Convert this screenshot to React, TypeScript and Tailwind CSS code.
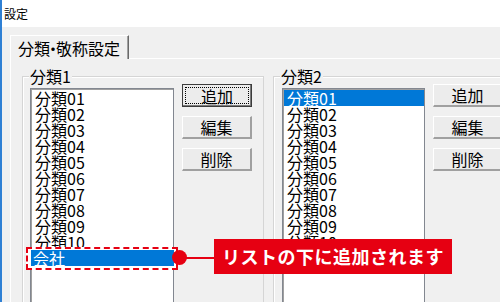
import React from 'react';

const items = ['分類01', '分類02', '分類03', '分類04', '分類05', '分類06', '分類07', '分類08', '分類09', '分類10'];

function ListBox({ selected, width }: { selected?: number; width: string }) {
  return (
    <div className={`${width} h-[260px] shrink-0 overflow-hidden bg-white border border-[#828790] shadow-[inset_1px_1px_0_#a0a0a0] pt-[1px] pl-[1px]`}>
      {items.map((item, i) => (
        <div
          key={item}
          className={`h-[16px] leading-[16px] pl-[3px] text-[16px] whitespace-nowrap ${
            i === selected ? 'bg-[#0078d7] text-white' : 'text-black'
          }`}
        >
          {item}
        </div>
      ))}
    </div>
  );
}

function WinButton({ label, focused }: { label: string; focused?: boolean }) {
  if (focused) {
    return (
      <div className="w-[70px] h-[23px] border border-[#3c3c3c] shadow-[inset_-1px_-1px_0_#7a7a7a] bg-[#ececec] p-[2px]">
        <div className="w-full h-full border border-dotted border-black flex items-center justify-center text-[16px] leading-none">
          {label}
        </div>
      </div>
    );
  }
  return (
    <div className="w-[70px] h-[23px] bg-[#ececec] border-t border-l border-white border-r-2 border-b-2 border-r-[#a0a0a0] border-b-[#a0a0a0] flex items-center justify-center text-[16px] leading-none">
      {label}
    </div>
  );
}

function GroupBox({ title, selected, listWidth, padLeft }: { title: string; selected?: number; listWidth: string; padLeft: string }) {
  return (
    <div className="relative w-[242px] h-[240px] shrink-0 border border-[#d5d5d5] shadow-[inset_1px_1px_0_white]">
      <div className="absolute left-[6px] top-[-10px] px-[1px] bg-[#f0f0f0] text-[16px] leading-[18px]">{title}</div>
      <div className={`flex ${padLeft} gap-[8px] pt-[7px]`}>
        <div className="pt-[4px]">
          <ListBox selected={selected} width={listWidth} />
        </div>
        <div className="flex flex-col gap-[9px]">
          <WinButton label="追加" focused={selected === undefined} />
          <WinButton label="編集" />
          <WinButton label="削除" />
        </div>
      </div>
    </div>
  );
}

export default function App() {
  return (
    <div className="relative w-[500px] h-[302px] overflow-hidden bg-[#f0f0f0] border-l-2 border-[#2f80d4] font-['Noto_Sans_CJK_JP',sans-serif] text-black">
      {/* title bar */}
      <div className="h-[27px] bg-white pl-[2px] flex items-center text-[12px]">設定</div>

      {/* tab */}
      <div className="ml-[8px] mt-[8px] flex">
        <div className="relative z-10 h-[24px] w-[119px] mb-[-1px] bg-[#f0f0f0] border-t border-l border-white border-r border-r-[#696969] shadow-[inset_-1px_0_0_#a0a0a0] pl-[7px] flex items-center text-[16px] leading-none">
          分類<span className="mx-[-5px]">・</span>敬称設定
        </div>
      </div>

      {/* panel */}
      <div className="ml-[8px] h-[260px] border-t border-l border-white pl-[11px] pt-[17px] flex gap-[9px]">
        <GroupBox title="分類1" listWidth="w-[144px]" padLeft="pl-[7px]" />
        <GroupBox title="分類2" selected={0} listWidth="w-[143px]" padLeft="pl-[8px]" />
      </div>

      {/* annotation */}
      <div className="absolute left-[24px] top-[247px] w-[152px] h-[23px] border-2 border-dashed border-[#e60012] bg-white pt-[1px] pl-[3px] pr-[2px]">
        <div className="h-[16px] bg-[#0078d7] text-white text-[16px] leading-[16px] pl-[2px]">会社</div>
      </div>
      <div className="absolute left-[170px] top-[250px] w-[15px] h-[15px] rounded-full bg-[#e60012]" />
      <div className="absolute left-[183px] top-[257px] w-[30px] h-[2px] bg-[#e60012]" />
      <div className="absolute left-[212px] top-[239px] w-[238px] h-[35px] bg-[#e60012] text-white text-[18px] font-bold flex items-center justify-center tracking-[0.5px]">
        リストの下に追加されます
      </div>
    </div>
  );
}
